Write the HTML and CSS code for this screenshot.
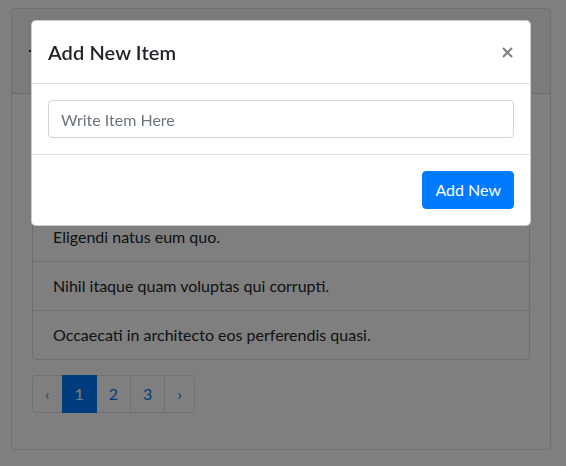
FILE: index.html
```html
<!DOCTYPE html>
<html lang="en">
<head>
<meta charset="utf-8">
<title>Todo</title>
<link rel="stylesheet" href="styles.css">
</head>
<body>
<div class="page">
  <div class="card">
    <div class="card-header">
      <span class="header-mark"></span>
    </div>
    <div class="card-body">
      <ul class="list-group">
        <li class="list-group-item">Voluptatem sint et dolorem.</li>
        <li class="list-group-item">Quia nesciunt aut ipsa.</li>
        <li class="list-group-item">Eligendi natus eum quo.</li>
        <li class="list-group-item">Nihil itaque quam voluptas qui corrupti.</li>
        <li class="list-group-item">Occaecati in architecto eos perferendis quasi.</li>
      </ul>
      <ul class="pagination">
        <li class="page-item"><a class="page-link arrow">&lsaquo;</a></li>
        <li class="page-item active"><a class="page-link">1</a></li>
        <li class="page-item"><a class="page-link">2</a></li>
        <li class="page-item"><a class="page-link">3</a></li>
        <li class="page-item"><a class="page-link arrow">&rsaquo;</a></li>
      </ul>
    </div>
  </div>
</div>

<div class="modal-backdrop"></div>
<div class="modal-dialog">
  <div class="modal-content">
    <div class="modal-header">
      <h5 class="modal-title">Add New Item</h5>
      <button class="close" aria-label="Close">
        <svg width="11" height="11" viewBox="0 0 11 11"><path d="M1 1 L10 10 M10 1 L1 10" stroke="#000" stroke-width="2" stroke-linecap="butt" fill="none"/></svg>
      </button>
    </div>
    <div class="modal-body">
      <input class="form-control" type="text" placeholder="Write Item Here">
    </div>
    <div class="modal-footer">
      <button class="btn-primary">Add New</button>
    </div>
  </div>
</div>
</body>
</html>
```
FILE: styles.css
```css
* { box-sizing: border-box; }
html, body { margin: 0; padding: 0; }
body {
  font-family: "Lato", "Open Sans", sans-serif;
  font-size: 16px;
  line-height: 1.5;
  color: #212529;
  background: #fff;
  width: 566px;
  height: 466px;
  overflow: hidden;
}
.page { padding: 8px 15px 0 11px; }
.card {
  border: 1px solid rgba(0,0,0,.125);
  border-radius: 4px;
  background: #fff;
}
.card-header {
  height: 85px;
  padding: 12px 20px 12px 17px;
  background: rgba(0,0,0,.03);
  border-bottom: 1px solid rgba(0,0,0,.125);
  border-radius: 3px 3px 0 0;
  display: flex;
  align-items: center;
}
.header-mark {
  display: block;
  width: 3px;
  height: 2px;
  background: #212529;
}
.card-body { padding: 20px; }
.list-group { list-style: none; margin: 0; padding: 0; }
.list-group-item {
  height: 49px;
  padding: 12px 20px;
  border: 1px solid rgba(0,0,0,.125);
  border-top-width: 0;
  background: #fff;
}
.list-group-item:first-child { height: 50px; border-top-width: 1px; border-radius: 4px 4px 0 0; }
.list-group-item:last-child { border-radius: 0 0 4px 4px; }
.pagination {
  list-style: none;
  display: flex;
  margin: 15px 0 16px 0;
  padding: 0;
}
.page-link {
  display: block;
  height: 38px;
  padding: 8px 12px;
  line-height: 20px;
  color: #007bff;
  background: #fff;
  border: 1px solid #dee2e6;
  margin-left: -1px;
  text-decoration: none;
}
.page-item:first-child .page-link { margin-left: 0; border-radius: 4px 0 0 4px; }
.page-item:last-child .page-link { border-radius: 0 4px 4px 0; }
.page-item.active .page-link {
  position: relative;
  z-index: 1;
  background: #007bff;
  border-color: #007bff;
  color: #fff;
}
.page-link.arrow { color: #6c757d; }
.page-item:last-child .page-link.arrow { color: #007bff; }

.modal-backdrop {
  position: fixed;
  inset: 0;
  z-index: 1040;
  background: rgba(0,0,0,.5);
}
.modal-dialog {
  position: fixed;
  z-index: 1050;
  top: 20px;
  left: 31px;
  width: 500px;
}
.modal-content {
  background: #fff;
  border: 1px solid rgba(0,0,0,.2);
  border-radius: 5px;
}
.modal-header {
  display: flex;
  align-items: center;
  justify-content: space-between;
  padding: 16px;
  border-bottom: 1px solid #dee2e6;
}
.modal-title {
  margin: 0;
  font-size: 20px;
  font-weight: 600;
  line-height: 1.5;
  color: #212529;
  letter-spacing: 0.1px;
}
.close {
  border: 0;
  background: transparent;
  padding: 0;
  margin-right: 1px;
  opacity: .5;
  display: flex;
}
.modal-body { padding: 16px; }
.form-control {
  display: block;
  width: 100%;
  height: 38px;
  padding: 6px 12px;
  font-family: inherit;
  font-size: 16px;
  line-height: 1.5;
  color: #495057;
  border: 1px solid #ced4da;
  border-radius: 4px;
  background: #fff;
}
.form-control::placeholder { color: #6c757d; opacity: 1; }
.modal-footer {
  display: flex;
  justify-content: flex-end;
  padding: 12px;
  border-top: 1px solid #dee2e6;
}
.btn-primary {
  margin: 4px;
  padding: 6px 12px;
  font-family: inherit;
  font-size: 16px;
  line-height: 1.5;
  color: #fff;
  background: #007bff;
  border: 1px solid #007bff;
  border-radius: 4px;
}
```
